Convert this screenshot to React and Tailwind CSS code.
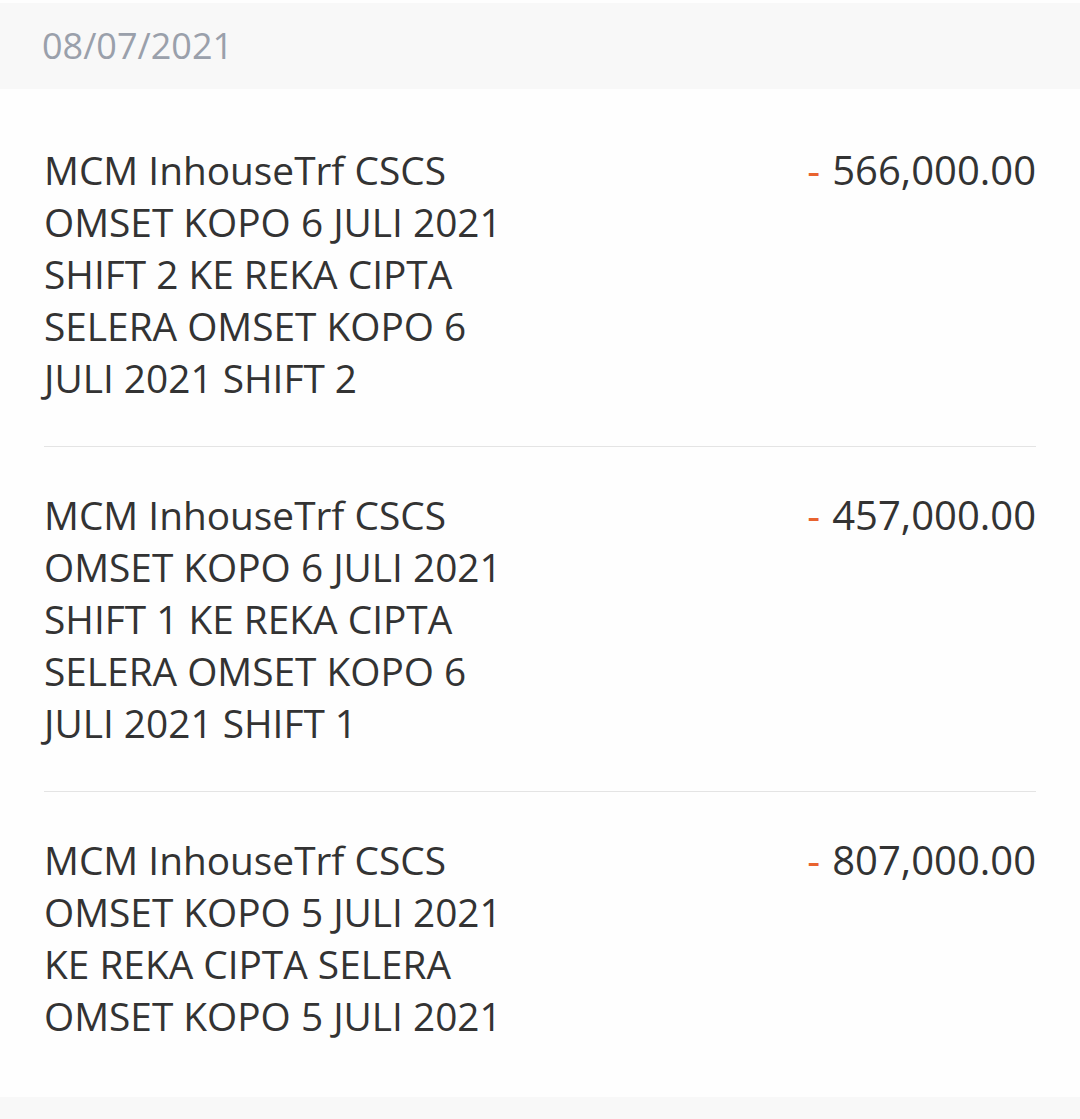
import React from "react";

const items = [
  {
    desc: "MCM InhouseTrf CSCS OMSET KOPO 6 JULI 2021 SHIFT 2 KE REKA CIPTA SELERA OMSET KOPO 6 JULI 2021 SHIFT 2",
    amount: "566,000.00",
  },
  {
    desc: "MCM InhouseTrf CSCS OMSET KOPO 6 JULI 2021 SHIFT 1 KE REKA CIPTA SELERA OMSET KOPO 6 JULI 2021 SHIFT 1",
    amount: "457,000.00",
  },
  {
    desc: "MCM InhouseTrf CSCS OMSET KOPO 5 JULI 2021 KE REKA CIPTA SELERA OMSET KOPO 5 JULI 2021",
    amount: "807,000.00",
  },
];

const App = () => {
  return (
    <div className="w-[1080px] h-[1119px] bg-[#fefefe] font-['Open_Sans',sans-serif] overflow-hidden pt-[3px]">
      <div className="h-[86px] bg-[#f8f8f8] flex items-center px-[42px]">
        <span className="text-[36px] text-[#9aa0ab] leading-none">08/07/2021</span>
      </div>
      <div className="px-[44px] pt-[13px] pb-[13px]">
        {items.map((item, i) => (
          <div
            key={i}
            className={
              "flex justify-between py-[42px] " +
              (i < items.length - 1 ? "border-b border-[#e4e4e4]" : "")
            }
          >
            <p className="w-[480px] text-[38.8px] leading-[52px] text-[#333333]">{item.desc}</p>
            <div className="text-[40px] leading-[52px] text-[#333333] whitespace-nowrap">
              <span className="text-[#e8632f] mr-[12px]">-</span>
              {item.amount}
            </div>
          </div>
        ))}
      </div>
      <div className="h-[30px] bg-[#f8f8f8]" />
    </div>
  );
};

export default App;
